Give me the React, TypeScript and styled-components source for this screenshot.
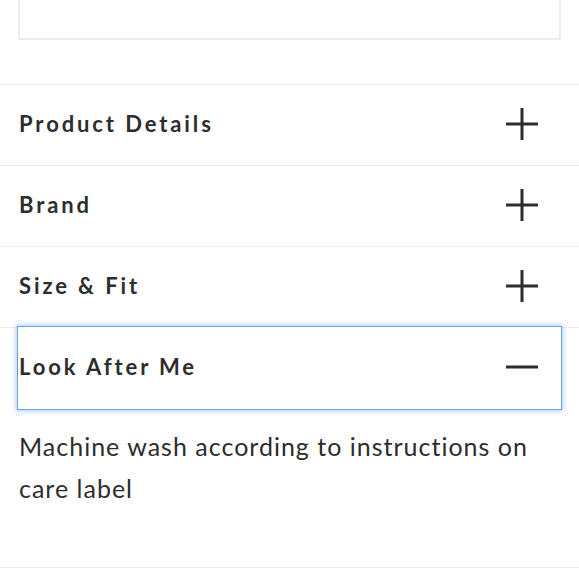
import React, { useState } from "react";
import styled, { createGlobalStyle } from "styled-components";

const GlobalStyle = createGlobalStyle`
  html, body {
    margin: 0;
    padding: 0;
    background: #fff;
  }
  body {
    font-family: Lato, "Noto Sans", sans-serif;
    color: #2d2d2d;
    -webkit-font-smoothing: antialiased;
  }
  * {
    box-sizing: border-box;
  }
`;

const Page = styled.div`
  width: 579px;
  display: flex;
  flex-direction: column;
`;

const InfoBox = styled.div`
  margin: 0 18px;
  height: 40px;
  border: 2px solid #ececec;
  border-top: none;
`;

const Accordion = styled.section`
  margin-top: 44px;
  border-top: 1px solid #ececec;
`;

const Item = styled.div`
  border-bottom: 1px solid #ececec;
`;

const Header = styled.button<{ $focused?: boolean }>`
  display: flex;
  align-items: center;
  justify-content: space-between;
  width: calc(100% - 36px);
  height: 80px;
  margin: 0 18px;
  padding: 0 23px 3px 1px;
  background: #fff;
  border: none;
  cursor: pointer;
  font-family: inherit;
  color: #2d2d2d;
  text-align: left;
  position: relative;
  outline: none;
  ${({ $focused }) =>
    $focused &&
    `
    margin-top: -1px;
    height: 82px;
    box-shadow: 0 0 0 1px #6d9fd2, 0 0 5px 2px rgba(90, 155, 230, 0.5);
  `}
`;

const Title = styled.span`
  font-size: 22px;
  font-weight: 700;
  letter-spacing: 2.9px;
`;

const Icon = styled.svg`
  width: 32px;
  height: 32px;
  flex: none;
`;

const Body = styled.div`
  padding: 16px 18px 58px 19px;
  font-size: 25px;
  line-height: 42px;
  font-weight: 400;
  letter-spacing: 1px;
`;

type Section = { title: string; body?: string };

const sections: Section[] = [
  { title: "Product Details" },
  { title: "Brand" },
  { title: "Size & Fit" },
  { title: "Look After Me", body: "Machine wash according to instructions on care label" },
];

const ToggleIcon: React.FC<{ open: boolean }> = ({ open }) => (
  <Icon viewBox="0 0 32 32">
    <rect x="0" y="14.5" width="32" height="3" fill="#2d2d2d" />
    {!open && <rect x="14.5" y="0" width="3" height="32" fill="#2d2d2d" />}
  </Icon>
);

export default function App() {
  const [open, setOpen] = useState(3);

  return (
    <Page>
      <GlobalStyle />
      <InfoBox />
      <Accordion>
        {sections.map((s, i) => (
          <Item key={s.title}>
            <Header $focused={open === i} onClick={() => setOpen(open === i ? -1 : i)}>
              <Title>{s.title}</Title>
              <ToggleIcon open={open === i} />
            </Header>
            {open === i && s.body && <Body>{s.body}</Body>}
          </Item>
        ))}
      </Accordion>
    </Page>
  );
}
